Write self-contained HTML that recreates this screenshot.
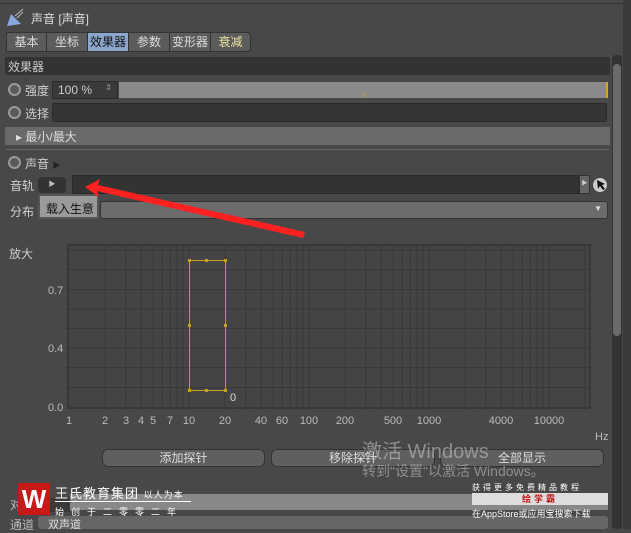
<!DOCTYPE html>
<html><head><meta charset="utf-8"><style>
*{box-sizing:border-box;margin:0;padding:0}
body{width:631px;height:529px;background:#484848;font-family:"Liberation Sans","Noto Sans CJK SC",sans-serif;font-size:12px;color:#d0d0d0;position:relative;overflow:hidden}
.a{position:absolute}
.tab{position:absolute;top:32px;height:20px;background:#5c5c5c;border:1px solid #333;text-align:center;line-height:18px;font-size:12px;color:#ddd}
.radio{position:absolute;width:13px;height:13px;border-radius:50%;border:2px solid #9a9a9a;background:#5a5a5a}
.btn{position:absolute;top:449px;height:18px;border-radius:6px;background:#5f5f5f;border:1px solid #333;text-align:center;line-height:16px;color:#ddd;font-size:12px}
</style></head><body>
<div class="a" style="left:0;top:3px;width:631px;height:1px;background:#333"></div>
<svg class="a" style="left:5px;top:8px" width="20" height="20"><polygon points="2,18 6,6 16,16" fill="#8aa8e0"/><line x1="10" y1="8" x2="18" y2="1" stroke="#bbb"/><line x1="12" y1="10" x2="18" y2="4" stroke="#bbb"/></svg>
<div class="a" style="left:31px;top:10px;color:#ddd">声音 [声音]</div>
<div class="tab" style="left:6px;width:41px">基本</div>
<div class="tab" style="left:46px;width:42px">坐标</div>
<div class="tab" style="left:87px;width:42px;background:#8ca6cc;color:#111">效果器</div>
<div class="tab" style="left:128px;width:42px">参数</div>
<div class="tab" style="left:169px;width:42px">变形器</div>
<div class="tab" style="left:210px;width:41px;border-radius:0 4px 4px 0;color:#e8e0a0">衰减</div>
<div class="a" style="left:5px;top:57px;width:605px;height:18px;background:#333;padding:1px 3px;color:#ccc">效果器</div>
<div class="radio" style="left:8px;top:83px"></div>
<div class="a" style="left:25px;top:82px">强度</div>
<div class="a" style="left:52px;top:81px;width:66px;height:18px;background:#3a3a3a;border:1px solid #2a2a2a;padding:1px 5px;color:#ccc">100 %<span style="float:right;font-size:8px;color:#999">⇕</span></div>
<div class="a" style="left:119px;top:82px;width:489px;height:16px;background:#8a8a8a;border-right:2px solid #e0a020"></div>
<div class="a" style="left:363px;top:93px;width:1px;height:4px;background:#d0a020"></div>
<div class="radio" style="left:8px;top:106px"></div>
<div class="a" style="left:25px;top:105px">选择</div>
<div class="a" style="left:52px;top:103px;width:555px;height:19px;background:#353535;border:1px solid #2a2a2a;border-radius:2px"></div>
<div class="a" style="left:5px;top:127px;width:605px;height:18px;background:#6a6a6a;padding:1px 0 0 11px;color:#ddd">▸ 最小/最大</div>
<div class="a" style="left:5px;top:149px;width:604px;height:1px;background:#666"></div>
<div class="radio" style="left:8px;top:156px"></div>
<div class="a" style="left:25px;top:155px">声音 <span style="font-size:8px;color:#222">▶</span></div>
<div class="a" style="left:10px;top:177px">音轨</div>
<div class="a" style="left:38px;top:177px;width:28px;height:16px;background:#333;border-radius:4px;color:#bbb;font-size:7px;text-align:center;line-height:16px">▶</div>
<div class="a" style="left:72px;top:175px;width:507px;height:19px;background:#333;border:1px solid #2a2a2a"></div>
<div class="a" style="left:579px;top:175px;width:11px;height:19px;background:#666;border:1px solid #333;font-size:6px;color:#ccc;line-height:17px;text-align:center">▶</div>
<div class="a" style="left:592px;top:177px;width:16px;height:16px;border-radius:50%;background:#ccc;border:1px solid #444"></div>
<svg class="a" style="left:594px;top:178px" width="14" height="14"><path d="M3,2 L4,11 L6,8 L9,12 L11,11 L8,7 L11,6 Z" fill="#111"/></svg>
<div class="a" style="left:10px;top:203px">分布</div>
<div class="a" style="left:100px;top:201px;width:508px;height:18px;background:#6c6c6c;border:1px solid #333;border-radius:3px"><span style="position:absolute;right:5px;top:2px;font-size:8px;color:#ddd">▼</span></div>
<div class="a" style="left:38px;top:194px;width:61px;height:25px;background:#9a9a9a;border:2px solid #555;color:#111;font-size:12px;padding:4px 0 0 6px">载入生意</div>
<svg class="a" style="left:0;top:0" width="631" height="529"><polygon points="85,187 100,179 98,185 305,232 303,238 97,191 99,197" fill="#ff2020"/></svg>
<div class="a" style="left:9px;top:245px;color:#ccc">放大</div>
<svg class="a" style="left:0;top:0" width="631" height="529" font-family="Liberation Sans" font-size="11" fill="#bbb">
<rect x="68" y="245" width="522" height="163" fill="#444" stroke="#383838" stroke-width="2"/>
<g stroke="#383838" stroke-width="1">
<line x1="66" y1="250" x2="590" y2="250"/><line x1="66" y1="269.5" x2="590" y2="269.5"/><line x1="66" y1="289.5" x2="590" y2="289.5"/><line x1="66" y1="309" x2="590" y2="309"/><line x1="66" y1="328.5" x2="590" y2="328.5"/><line x1="66" y1="348" x2="590" y2="348"/><line x1="66" y1="367.5" x2="590" y2="367.5"/><line x1="66" y1="387.5" x2="590" y2="387.5"/>
<line x1="105" y1="245" x2="105" y2="410"/><line x1="126" y1="245" x2="126" y2="410"/><line x1="141" y1="245" x2="141" y2="410"/><line x1="153" y1="245" x2="153" y2="410"/><line x1="162" y1="245" x2="162" y2="410"/><line x1="170" y1="245" x2="170" y2="410"/><line x1="177" y1="245" x2="177" y2="410"/><line x1="183" y1="245" x2="183" y2="410"/><line x1="189" y1="245" x2="189" y2="410"/>
<line x1="225" y1="245" x2="225" y2="410"/><line x1="246" y1="245" x2="246" y2="410"/><line x1="261" y1="245" x2="261" y2="410"/><line x1="273" y1="245" x2="273" y2="410"/><line x1="282" y1="245" x2="282" y2="410"/><line x1="290" y1="245" x2="290" y2="410"/><line x1="297" y1="245" x2="297" y2="410"/><line x1="303" y1="245" x2="303" y2="410"/><line x1="309" y1="245" x2="309" y2="410"/>
<line x1="345" y1="245" x2="345" y2="410"/><line x1="366" y1="245" x2="366" y2="410"/><line x1="381" y1="245" x2="381" y2="410"/><line x1="393" y1="245" x2="393" y2="410"/><line x1="402" y1="245" x2="402" y2="410"/><line x1="410" y1="245" x2="410" y2="410"/><line x1="417" y1="245" x2="417" y2="410"/><line x1="423" y1="245" x2="423" y2="410"/><line x1="429" y1="245" x2="429" y2="410"/>
<line x1="465" y1="245" x2="465" y2="410"/><line x1="486" y1="245" x2="486" y2="410"/><line x1="501" y1="245" x2="501" y2="410"/><line x1="513" y1="245" x2="513" y2="410"/><line x1="522" y1="245" x2="522" y2="410"/><line x1="530" y1="245" x2="530" y2="410"/><line x1="537" y1="245" x2="537" y2="410"/><line x1="543" y1="245" x2="543" y2="410"/><line x1="549" y1="245" x2="549" y2="410"/><line x1="585" y1="245" x2="585" y2="410"/>
</g>
<rect x="189.5" y="260.5" width="36" height="130" fill="none" stroke="#c8a020"/>
<g fill="#c8a020"><rect x="188" y="259" width="3" height="3"/><rect x="205" y="259" width="3" height="3"/><rect x="224" y="259" width="3" height="3"/><rect x="188" y="324" width="3" height="3"/><rect x="224" y="324" width="3" height="3"/><rect x="188" y="389" width="3" height="3"/><rect x="205" y="389" width="3" height="3"/><rect x="224" y="389" width="3" height="3"/></g>
<text x="230" y="401" fill="#ddd">0</text>
<text x="48" y="294">0.7</text><text x="48" y="352">0.4</text><text x="48" y="411">0.0</text>
<g text-anchor="middle"><text x="69" y="424">1</text><text x="105" y="424">2</text><text x="126" y="424">3</text><text x="141" y="424">4</text><text x="153" y="424">5</text><text x="170" y="424">7</text><text x="189" y="424">10</text><text x="225" y="424">20</text><text x="261" y="424">40</text><text x="282" y="424">60</text><text x="309" y="424">100</text><text x="345" y="424">200</text><text x="393" y="424">500</text><text x="429" y="424">1000</text><text x="501" y="424">4000</text><text x="549" y="424">10000</text></g>
<text x="595" y="440">Hz</text>
</svg>
<div class="btn" style="left:102px;width:163px">添加探针</div>
<div class="btn" style="left:271px;width:164px">移除探针</div>
<div class="btn" style="left:440px;width:164px">全部显示</div>
<div class="a" style="left:362px;top:435px;font-size:20px;color:rgba(200,200,200,.55)">激活 Windows</div>
<div class="a" style="left:362px;top:461px;font-size:14px;color:rgba(200,200,200,.55)">转到"设置"以激活 Windows。</div>
<div class="a" style="left:10px;top:496px;color:#bbb">对</div>
<div class="a" style="left:70px;top:494px;width:538px;height:16px;background:#888"></div>
<div class="a" style="left:40px;top:498px;width:30px;height:14px;background:#3a3a3a"></div>
<div class="a" style="left:10px;top:516px;color:#bbb">通道</div>
<div class="a" style="left:38px;top:516px;width:570px;height:13px;background:#666;border-radius:3px;padding-left:10px;color:#ddd;font-size:11px">双声道</div>
<div class="a" style="left:18px;top:483px;width:32px;height:32px;background:#c81818;color:#fff;font-weight:bold;font-size:26px;text-align:center;line-height:32px">W</div>
<div class="a" style="left:55px;top:483px;color:#fff;font-size:13px;letter-spacing:1px">王氏教育集团 <span style="font-size:9px">以人为本</span></div>
<div class="a" style="left:55px;top:501px;width:136px;height:1px;background:#fff"></div>
<div class="a" style="left:55px;top:505px;color:#fff;font-size:9px;letter-spacing:7px">始创于二零零二年</div>
<div class="a" style="left:472px;top:482px;color:#fff;font-size:8px;letter-spacing:3px">获得更多免费精品教程</div>
<div class="a" style="left:472px;top:493px;width:136px;height:12px;background:#ddd;color:#c01010;font-size:9px;font-weight:bold;text-align:center;letter-spacing:3px;line-height:12px">绘学霸</div>
<div class="a" style="left:472px;top:507px;color:#fff;font-size:9px">在AppStore或应用宝搜索下载</div>
<div class="a" style="left:612px;top:55px;width:10px;height:474px;background:#333;border-radius:4px"></div>
<div class="a" style="left:613px;top:64px;width:8px;height:272px;background:#6a6a6a;border-radius:4px"></div>
<div class="a" style="left:623px;top:0;width:8px;height:529px;background:#3a3a3a"></div>
</body></html>
